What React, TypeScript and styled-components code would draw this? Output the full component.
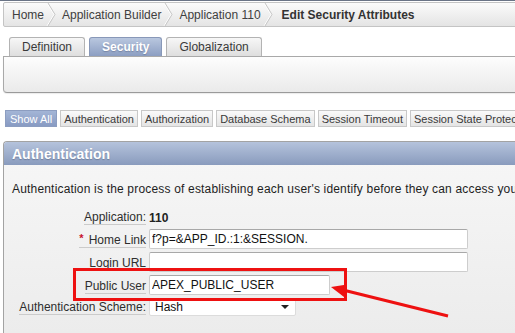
import React from 'react';
import styled, { createGlobalStyle } from 'styled-components';

const GlobalStyle = createGlobalStyle`
  html, body { margin: 0; padding: 0; background: #fff; }
  body { font-family: "Liberation Sans", Arial, sans-serif; color: #333; overflow: hidden; }
  * { box-sizing: border-box; }
`;

const Page = styled.div`
  position: relative;
  width: 515px;
  height: 333px;
  overflow: hidden;
  border-top: 1px solid #6a7486;
  padding-top: 1px;
  display: flex;
  flex-direction: column;
`;

const Breadcrumb = styled.nav`
  margin-left: 3px;
  width: 540px;
  height: 25px;
  border: 1px solid #c4c4c4;
  border-radius: 2px;
  background: linear-gradient(#fbfbfb, #e4e4e4);
  display: flex;
  align-items: center;
  padding-left: 8px;
  font-size: 12px;
  color: #333;
  white-space: nowrap;
`;

const Crumb = styled.span<{ $current?: boolean }>`
  font-weight: ${(p) => (p.$current ? 'bold' : 'normal')};
  color: ${(p) => (p.$current ? '#333' : '#404040')};
`;

const Sep = styled.svg<{ $after: number }>`
  width: 10px;
  height: 23px;
  margin: 0 ${(p) => p.$after}px 0 2px;
  flex: none;
`;

const Chevron = ({ after = 6 }: { after?: number }) => (
  <Sep $after={after} viewBox="0 0 10 23">
    <polyline points="2,0 9,11.5 2,23" fill="none" stroke="#ffffff" strokeWidth="1" transform="translate(-1,0)" />
    <polyline points="2,0 9,11.5 2,23" fill="none" stroke="#c6c6c6" strokeWidth="1" />
  </Sep>
);

const TabRow = styled.div`
  margin: 10px 0 0 9px;
  display: flex;
  gap: 4px;
  height: 19px;
`;

const Tab = styled.div<{ $active?: boolean }>`
  height: 19px;
  padding: 0 12px;
  display: flex;
  align-items: center;
  font-size: 12px;
  border: 1px solid ${(p) => (p.$active ? '#8898b8' : '#b3b3b3')};
  border-bottom: none;
  border-radius: 3px 3px 0 0;
  background: ${(p) => (p.$active ? 'linear-gradient(#b9c7df, #8c9ec2)' : 'linear-gradient(#f7f7f7, #dedede)')};
  color: ${(p) => (p.$active ? '#fff' : '#3a3a3a')};
  font-weight: ${(p) => (p.$active ? 'bold' : 'normal')};
  text-shadow: ${(p) => (p.$active ? '0 1px 1px rgba(60,70,100,0.35)' : 'none')};
`;

const TabPanel = styled.div`
  margin-left: 3px;
  width: 540px;
  height: 37px;
  border: 1px solid #a9a9a9;
  border-bottom-color: #9a9a9a;
  border-right: none;
  border-radius: 0 0 0 4px;
  background: linear-gradient(#fdfdfd, #eaeaea);
  box-shadow: 0 1px 1px rgba(0, 0, 0, 0.08);
`;

const FilterRow = styled.div`
  margin: 17px 0 0 5px;
  display: flex;
  gap: 3px;
  white-space: nowrap;
`;

const FilterButton = styled.div<{ $active?: boolean }>`
  height: 17px;
  padding: 0 ${(p) => (p.$active ? 4 : 3)}px;
  display: flex;
  align-items: center;
  font-size: 11px;
  border: 1px solid ${(p) => (p.$active ? '#8c9dc0' : '#c8c8c8')};
  background: ${(p) => (p.$active ? 'linear-gradient(#a3b5d6, #889bc3)' : 'linear-gradient(#fafafa, #e4e4e4)')};
  color: ${(p) => (p.$active ? '#fff' : '#3a3a3a')};
`;

const AuthPanel = styled.section`
  margin: 14px 0 0 3px;
  width: 540px;
  flex: 1;
  border: 1px solid #a3a3a3;
  border-right: none;
  border-bottom: none;
  border-radius: 4px 0 0 0;
  background: linear-gradient(#f7f7f7, #ececec);
  display: flex;
  flex-direction: column;
`;

const PanelHeader = styled.h2`
  margin: 0;
  height: 23px;
  padding-left: 8px;
  display: flex;
  align-items: center;
  font-size: 14px;
  font-weight: bold;
  color: #fff;
  border-radius: 3px 0 0 0;
  background: linear-gradient(#b5c3dc, #899bbd);
  text-shadow: 0 1px 1px rgba(50, 60, 90, 0.35);
`;

const PanelBody = styled.div`
  padding: 17px 0 0 8px;
`;

const Intro = styled.p`
  margin: 0;
  font-size: 12px;
  line-height: 14px;
  letter-spacing: 0.18px;
  color: #1e1e1e;
  white-space: nowrap;
`;

const Form = styled.div`
  margin-top: 12px;
  display: flex;
  flex-direction: column;
  gap: 3px;
`;

const Row = styled.div<{ $h: number }>`
  height: ${(p) => p.$h}px;
  display: flex;
  gap: 3px;
`;

const LabelCell = styled.div`
  width: 134px;
  flex: none;
  display: flex;
  justify-content: flex-end;
  align-items: flex-end;
  padding-bottom: 1px;
`;

const Label = styled.label`
  font-size: 12px;
  line-height: 13px;
  color: #2e2e2e;
  border-bottom: 1px solid #cbcbcb;
  white-space: nowrap;
`;

const Required = styled.span`
  color: #c8102e;
  font-weight: bold;
  font-size: 11px;
  vertical-align: top;
  margin-right: 5px;
  position: relative;
  top: -2px;
`;

const Value = styled.span`
  font-size: 12px;
  font-weight: bold;
  color: #222;
  align-self: flex-end;
  line-height: 15px;
`;

const TextInput = styled.input<{ $w: number }>`
  width: ${(p) => p.$w}px;
  height: 20px;
  border: 1px solid #cdcdcd;
  border-top-color: #a8a8a8;
  border-radius: 2px;
  background: #fff;
  padding: 0 2px;
  font-family: "Liberation Sans", Arial, sans-serif;
  font-size: 12px;
  color: #111;
  outline: none;
`;

const SelectBox = styled.div`
  width: 147px;
  height: 18px;
  border: 1px solid #dcdcdc;
  border-radius: 2px;
  background: #fff;
  padding: 0 5px;
  display: flex;
  align-items: center;
  justify-content: space-between;
  font-size: 12px;
  color: #111;
`;

const Caret = styled.span`
  width: 0;
  height: 0;
  border-left: 4px solid transparent;
  border-right: 4px solid transparent;
  border-top: 4px solid #222;
  margin-right: 1px;
`;

const Annotation = styled.svg`
  position: absolute;
  left: 0;
  top: 0;
  width: 515px;
  height: 333px;
  pointer-events: none;
`;

export default function App() {
  return (
    <>
      <GlobalStyle />
      <Page>
        <Breadcrumb>
          <Crumb>Home</Crumb>
          <Chevron />
          <Crumb>Application Builder</Crumb>
          <Chevron />
          <Crumb>Application 110</Crumb>
          <Chevron after={9} />
          <Crumb $current>Edit Security Attributes</Crumb>
        </Breadcrumb>

        <TabRow>
          <Tab>Definition</Tab>
          <Tab $active>Security</Tab>
          <Tab>Globalization</Tab>
        </TabRow>
        <TabPanel />

        <FilterRow>
          <FilterButton $active>Show All</FilterButton>
          <FilterButton>Authentication</FilterButton>
          <FilterButton>Authorization</FilterButton>
          <FilterButton>Database Schema</FilterButton>
          <FilterButton>Session Timeout</FilterButton>
          <FilterButton>Session State Protection</FilterButton>
        </FilterRow>

        <AuthPanel>
          <PanelHeader>Authentication</PanelHeader>
          <PanelBody>
            <Intro>
              Authentication is the process of establishing each user's identify before they can access your application.
            </Intro>
            <Form>
              <Row $h={18}>
                <LabelCell>
                  <Label>Application:</Label>
                </LabelCell>
                <Value>110</Value>
              </Row>
              <Row $h={20}>
                <LabelCell>
                  <Label>
                    <Required>*</Required>Home Link
                  </Label>
                </LabelCell>
                <TextInput $w={319} readOnly value="f?p=&APP_ID.:1:&SESSION." />
              </Row>
              <Row $h={20}>
                <LabelCell>
                  <Label>Login URL</Label>
                </LabelCell>
                <TextInput $w={319} readOnly value="" />
              </Row>
              <Row $h={20}>
                <LabelCell>
                  <Label>Public User</Label>
                </LabelCell>
                <TextInput $w={181} readOnly value="APEX_PUBLIC_USER" />
              </Row>
              <Row $h={18}>
                <LabelCell>
                  <Label>Authentication Scheme:</Label>
                </LabelCell>
                <SelectBox>
                  <span>Hash</span>
                  <Caret />
                </SelectBox>
              </Row>
            </Form>
          </PanelBody>
        </AuthPanel>

        <Annotation viewBox="0 0 515 333">
          <rect x="74.5" y="268.5" width="271" height="30" fill="none" stroke="#ee1111" strokeWidth="3" />
          <line x1="448" y1="315" x2="343" y2="289" stroke="#ee1111" strokeWidth="3" />
          <polygon points="331,286 347,283.5 344,296" fill="#ee1111" />
        </Annotation>
      </Page>
    </>
  );
}
